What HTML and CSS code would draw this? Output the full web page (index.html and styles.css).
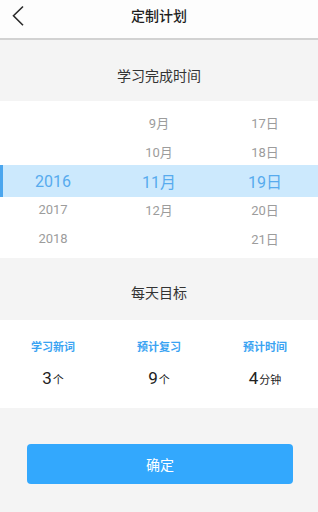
FILE: index.html
```html
<!DOCTYPE html>
<html lang="zh">
<head>
<meta charset="utf-8">
<link rel="stylesheet" href="styles.css">
</head>
<body>
<div class="app">
  <header class="topbar">
    <span class="back">
      <svg width="14" height="22" viewBox="0 0 14 22"><polyline points="11,1.5 1.5,10.8 11,20.2" fill="none" stroke="#2b2b2b" stroke-width="1.6"/></svg>
    </span>
    <h1 class="title">定制计划</h1>
  </header>

  <div class="section-head first">学习完成时间</div>

  <div class="picker">
    <div class="prow"><span></span><span>9月</span><span>17日</span></div>
    <div class="prow"><span></span><span>10月</span><span>18日</span></div>
    <div class="prow sel"><span>2016</span><span>11月</span><span>19日</span></div>
    <div class="prow"><span>2017</span><span>12月</span><span>20日</span></div>
    <div class="prow"><span>2018</span><span></span><span>21日</span></div>
  </div>

  <div class="section-head second">每天目标</div>

  <div class="goals">
    <div class="goal"><div class="glabel">学习新词</div><div class="gval">3<small>个</small></div></div>
    <div class="goal"><div class="glabel">预计复习</div><div class="gval">9<small>个</small></div></div>
    <div class="goal"><div class="glabel">预计时间</div><div class="gval">4<small>分钟</small></div></div>
  </div>

  <div class="footer">
    <button class="confirm">确定</button>
  </div>
</div>
</body>
</html>
```

FILE: styles.css
```css
* { box-sizing: border-box; }
html, body { margin: 0; padding: 0; }
body {
  width: 318px;
  height: 512px;
  overflow: hidden;
  background: #f4f4f4;
  font-family: Roboto, "Noto Sans CJK SC", sans-serif;
  color: #333;
}
.app { display: flex; flex-direction: column; height: 512px; }

.topbar {
  height: 40px;
  background: #fdfdfd;
  border-bottom: 2px solid #d2d2d2;
  display: flex;
  align-items: center;
  justify-content: center;
  position: relative;
}
.back {
  position: absolute;
  left: 12px;
  top: 5px;
  width: 14px;
  height: 22px;
  display: flex;
}
.title {
  margin: 0;
  margin-top: -8px;
  font-size: 14px;
  font-weight: 500;
  color: #1e1e1e;
  font-family: "Noto Sans CJK SC", sans-serif;
}

.section-head {
  font-family: "Noto Sans CJK SC", sans-serif;
  font-size: 14px;
  color: #333;
  text-align: center;
  line-height: 20px;
}
.section-head.first { height: 61px; padding-top: 25px; }
.section-head.second { height: 62px; padding-top: 24px; }

.picker {
  background: #fff;
  height: 157px;
  padding-top: 7px;
}
.prow {
  display: grid;
  grid-template-columns: 1fr 1fr 1fr;
  height: 29px;
  align-items: center;
  text-align: center;
  font-size: 13px;
  color: #9c9c9c;
}
.prow.sel {
  background: #cce9fd;
  box-shadow: inset 3px 0 0 #4ba6ee;
  height: 32px;
  margin: -1px 0 -2px;
  font-size: 16px;
  color: #57abee;
}

.goals {
  background: #fff;
  height: 88px;
  display: grid;
  grid-template-columns: 1fr 1fr 1fr;
  padding-top: 18px;
}
.goal { display: flex; flex-direction: column; align-items: center; }
.glabel {
  font-family: "Noto Sans CJK SC", sans-serif;
  font-size: 11px;
  font-weight: 700;
  color: #3aa3f2;
  line-height: 16px;
}
.gval {
  margin-top: 13px;
  font-size: 17px;
  color: #222;
  line-height: 22px;
}
.gval small {
  font-family: "Noto Sans CJK SC", sans-serif;
  font-size: 11px;
  margin-left: 1px;
}

.footer {
  flex: 1;
  padding: 36px 25px 0 27px;
}
.confirm {
  display: block;
  width: 266px;
  height: 40px;
  border: none;
  border-radius: 4px;
  background: #33a8fd;
  color: #fff;
  font-family: "Noto Sans CJK SC", sans-serif;
  font-size: 14px;
  padding: 0;
}
```
